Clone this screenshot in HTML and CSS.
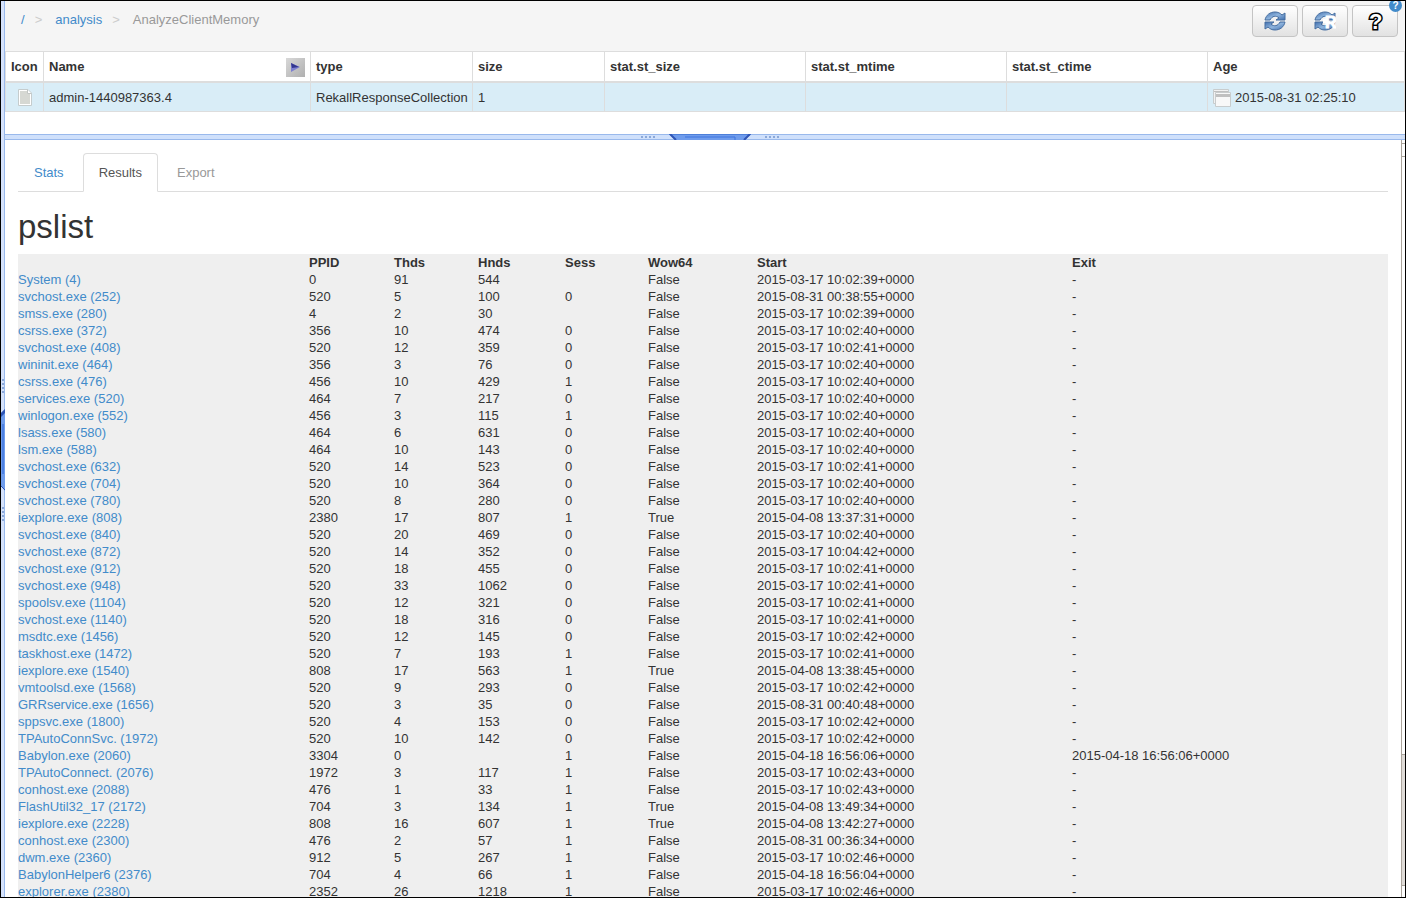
FILE: index.html
```html
<!DOCTYPE html>
<html lang="en">
<head>
    <meta charset="UTF-8">
    <meta name="viewport" content="width=device-width, initial-scale=1.0">
    <title>AnalyzeClientMemory</title>
    <link rel="stylesheet" href="styles.css">
</head>
<body>
    <div class="left-splitter">
        <span class="dots-v"></span>
        <svg class="grip-v" width="4" height="82" viewBox="0 0 4 82">
            <path d="M0 4L4 0V82L0 77Z" fill="#6f9cec"/>
            <path d="M0 4L4 0V4L0 8Z" fill="#2f55b5"/>
            <path d="M2 15V65" stroke="#2f66d8"/>
            <path d="M0 77L4 81" stroke="#2f55b5"/>
        </svg>
        <span class="dots-v"></span>
    </div>

    <main class="main">
        <header class="toolbar">
            <nav class="breadcrumb">
                <a href="#">/</a><span class="sep">&gt;</span>
                <a href="#">analysis</a><span class="sep">&gt;</span>
                <span class="current">AnalyzeClientMemory</span>
            </nav>
            <div class="buttons">
                <button type="button" aria-label="Refresh">
                    <svg width="22" height="20" viewBox="0 0 22 20">
                        <defs>
                            <linearGradient id="blue" x1="0" y1="0" x2="1" y2="1">
                                <stop offset="0" stop-color="#3f6ead"/>
                                <stop offset="0.5" stop-color="#8fb4dd"/>
                                <stop offset="1" stop-color="#3f6ead"/>
                            </linearGradient>
                            <g id="refresh">
                                <path d="M1 9C2 4 6 1 11 1C14 1 16 2 18 4L21 2V9H12L15 7C12 4 8 5 6 9Z" fill="url(#blue)" stroke="#446c9f"/>
                                <path d="M21 11C20 16 16 19 11 19C8 19 6 18 4 16L1 18V11H10L7 13C10 16 14 15 16 11Z" fill="url(#blue)" stroke="#446c9f"/>
                            </g>
                        </defs>
                        <use href="#refresh"/>
                    </svg>
                </button>
                <button type="button" aria-label="Refresh recursively">
                    <svg width="22" height="20" viewBox="0 0 22 20">
                        <use href="#refresh"/>
                        <path d="M9 10H13" stroke="#fff" stroke-width="4"/>
                        <text class="r-mark" x="11" y="17">R</text>
                    </svg>
                </button>
                <button type="button" aria-label="Help">
                    <svg width="22" height="22" viewBox="0 0 22 22">
                        <text class="q-mark" x="5" y="19">?</text>
                    </svg>
                </button>
            </div>
        </header>

        <section class="top-pane">
            <table class="files">
                <colgroup>
                    <col class="f-icon"><col class="f-name"><col class="f-type"><col class="f-num">
                    <col class="f-stat"><col class="f-stat"><col class="f-stat"><col>
                </colgroup>
                <thead>
                    <tr>
                        <th>Icon</th>
                        <th>
                            <div class="name-head">Name
                                <button type="button" class="expand" aria-label="Expand">
                                    <svg width="9" height="9" viewBox="0 0 9 9">
                                        <path d="M0 0L9 4L0 9Z" fill="#7d7fd0"/>
                                        <path d="M0 0L8 4L1 5Z" fill="#33368f"/>
                                    </svg>
                                </button>
                            </div>
                        </th>
                        <th>type</th>
                        <th>size</th>
                        <th>stat.st_size</th>
                        <th>stat.st_mtime</th>
                        <th>stat.st_ctime</th>
                        <th>Age</th>
                    </tr>
                </thead>
                <tbody>
                    <tr>
                        <td class="center">
                            <svg width="16" height="17" viewBox="0 0 16 17">
                                <path d="M1.5 0.5H11L14.5 4V16.5H1.5Z" fill="#fff" stroke="#c5cccd"/>
                                <path d="M3 2H10L13 5V15H3Z" fill="#d6d8d3"/>
                                <path d="M10.5 1V4.5H14" fill="#fff" stroke="#c2c6c4"/>
                            </svg>
                        </td>
                        <td>admin-1440987363.4</td>
                        <td>RekallResponseCollection</td>
                        <td>1</td>
                        <td></td>
                        <td></td>
                        <td></td>
                        <td>
                            <div class="age">
                                <svg width="18" height="18" viewBox="0 0 18 18">
                                    <path d="M0.5 0.5H15.5V14.5H0.5Z" fill="#f2f2f2" stroke="#c8cccd"/>
                                    <path d="M1 2H15V3H1Z" fill="#c0c0c0"/>
                                    <path d="M2.5 3.5H17.5V17.5H2.5Z" fill="#f8f8f8" stroke="#c8cccd"/>
                                    <path d="M3 5H17V8H3Z" fill="#c0c0c0"/>
                                </svg>
                                2015-08-31 02:25:10
                            </div>
                        </td>
                    </tr>
                </tbody>
            </table>
        </section>

        <div class="splitter">
            <span class="dots"></span>
            <svg width="82" height="6" viewBox="0 0 82 6">
                <path d="M0 0H82L76 6H6Z" fill="#6f9cec"/>
                <path d="M0 0H82V1H0Z" fill="#4d7fd9"/>
                <path d="M1 0L7 6M81 0L75 6" stroke="#2f55b5" stroke-width="2"/>
                <path d="M16 3H66V6" fill="none" stroke="#3f74de"/>
            </svg>
            <span class="dots"></span>
        </div>

        <section class="bottom-pane">
            <div class="content">
                <ul class="tabs">
                    <li><a href="#">Stats</a></li>
                    <li><a href="#" class="active">Results</a></li>
                    <li><a href="#" class="disabled">Export</a></li>
                </ul>

                <h1>pslist</h1>

                <table class="pslist">
                    <colgroup>
                        <col class="p-name"><col class="p-ppid"><col class="p-thds"><col class="p-hnds"><col class="p-sess">
                        <col class="p-wow"><col class="p-start"><col>
                    </colgroup>
                    <thead>
                        <tr><th></th><th>PPID</th><th>Thds</th><th>Hnds</th><th>Sess</th><th>Wow64</th><th>Start</th><th>Exit</th></tr>
                    </thead>
                    <tbody>
                        <tr><td><a href="#">System (4)</a></td><td>0</td><td>91</td><td>544</td><td></td><td>False</td><td>2015-03-17 10:02:39+0000</td><td>-</td></tr>
                        <tr><td><a href="#">svchost.exe (252)</a></td><td>520</td><td>5</td><td>100</td><td>0</td><td>False</td><td>2015-08-31 00:38:55+0000</td><td>-</td></tr>
                        <tr><td><a href="#">smss.exe (280)</a></td><td>4</td><td>2</td><td>30</td><td></td><td>False</td><td>2015-03-17 10:02:39+0000</td><td>-</td></tr>
                        <tr><td><a href="#">csrss.exe (372)</a></td><td>356</td><td>10</td><td>474</td><td>0</td><td>False</td><td>2015-03-17 10:02:40+0000</td><td>-</td></tr>
                        <tr><td><a href="#">svchost.exe (408)</a></td><td>520</td><td>12</td><td>359</td><td>0</td><td>False</td><td>2015-03-17 10:02:41+0000</td><td>-</td></tr>
                        <tr><td><a href="#">wininit.exe (464)</a></td><td>356</td><td>3</td><td>76</td><td>0</td><td>False</td><td>2015-03-17 10:02:40+0000</td><td>-</td></tr>
                        <tr><td><a href="#">csrss.exe (476)</a></td><td>456</td><td>10</td><td>429</td><td>1</td><td>False</td><td>2015-03-17 10:02:40+0000</td><td>-</td></tr>
                        <tr><td><a href="#">services.exe (520)</a></td><td>464</td><td>7</td><td>217</td><td>0</td><td>False</td><td>2015-03-17 10:02:40+0000</td><td>-</td></tr>
                        <tr><td><a href="#">winlogon.exe (552)</a></td><td>456</td><td>3</td><td>115</td><td>1</td><td>False</td><td>2015-03-17 10:02:40+0000</td><td>-</td></tr>
                        <tr><td><a href="#">lsass.exe (580)</a></td><td>464</td><td>6</td><td>631</td><td>0</td><td>False</td><td>2015-03-17 10:02:40+0000</td><td>-</td></tr>
                        <tr><td><a href="#">lsm.exe (588)</a></td><td>464</td><td>10</td><td>143</td><td>0</td><td>False</td><td>2015-03-17 10:02:40+0000</td><td>-</td></tr>
                        <tr><td><a href="#">svchost.exe (632)</a></td><td>520</td><td>14</td><td>523</td><td>0</td><td>False</td><td>2015-03-17 10:02:41+0000</td><td>-</td></tr>
                        <tr><td><a href="#">svchost.exe (704)</a></td><td>520</td><td>10</td><td>364</td><td>0</td><td>False</td><td>2015-03-17 10:02:40+0000</td><td>-</td></tr>
                        <tr><td><a href="#">svchost.exe (780)</a></td><td>520</td><td>8</td><td>280</td><td>0</td><td>False</td><td>2015-03-17 10:02:40+0000</td><td>-</td></tr>
                        <tr><td><a href="#">iexplore.exe (808)</a></td><td>2380</td><td>17</td><td>807</td><td>1</td><td>True</td><td>2015-04-08 13:37:31+0000</td><td>-</td></tr>
                        <tr><td><a href="#">svchost.exe (840)</a></td><td>520</td><td>20</td><td>469</td><td>0</td><td>False</td><td>2015-03-17 10:02:40+0000</td><td>-</td></tr>
                        <tr><td><a href="#">svchost.exe (872)</a></td><td>520</td><td>14</td><td>352</td><td>0</td><td>False</td><td>2015-03-17 10:04:42+0000</td><td>-</td></tr>
                        <tr><td><a href="#">svchost.exe (912)</a></td><td>520</td><td>18</td><td>455</td><td>0</td><td>False</td><td>2015-03-17 10:02:41+0000</td><td>-</td></tr>
                        <tr><td><a href="#">svchost.exe (948)</a></td><td>520</td><td>33</td><td>1062</td><td>0</td><td>False</td><td>2015-03-17 10:02:41+0000</td><td>-</td></tr>
                        <tr><td><a href="#">spoolsv.exe (1104)</a></td><td>520</td><td>12</td><td>321</td><td>0</td><td>False</td><td>2015-03-17 10:02:41+0000</td><td>-</td></tr>
                        <tr><td><a href="#">svchost.exe (1140)</a></td><td>520</td><td>18</td><td>316</td><td>0</td><td>False</td><td>2015-03-17 10:02:41+0000</td><td>-</td></tr>
                        <tr><td><a href="#">msdtc.exe (1456)</a></td><td>520</td><td>12</td><td>145</td><td>0</td><td>False</td><td>2015-03-17 10:02:42+0000</td><td>-</td></tr>
                        <tr><td><a href="#">taskhost.exe (1472)</a></td><td>520</td><td>7</td><td>193</td><td>1</td><td>False</td><td>2015-03-17 10:02:41+0000</td><td>-</td></tr>
                        <tr><td><a href="#">iexplore.exe (1540)</a></td><td>808</td><td>17</td><td>563</td><td>1</td><td>True</td><td>2015-04-08 13:38:45+0000</td><td>-</td></tr>
                        <tr><td><a href="#">vmtoolsd.exe (1568)</a></td><td>520</td><td>9</td><td>293</td><td>0</td><td>False</td><td>2015-03-17 10:02:42+0000</td><td>-</td></tr>
                        <tr><td><a href="#">GRRservice.exe (1656)</a></td><td>520</td><td>3</td><td>35</td><td>0</td><td>False</td><td>2015-08-31 00:40:48+0000</td><td>-</td></tr>
                        <tr><td><a href="#">sppsvc.exe (1800)</a></td><td>520</td><td>4</td><td>153</td><td>0</td><td>False</td><td>2015-03-17 10:02:42+0000</td><td>-</td></tr>
                        <tr><td><a href="#">TPAutoConnSvc. (1972)</a></td><td>520</td><td>10</td><td>142</td><td>0</td><td>False</td><td>2015-03-17 10:02:42+0000</td><td>-</td></tr>
                        <tr><td><a href="#">Babylon.exe (2060)</a></td><td>3304</td><td>0</td><td></td><td>1</td><td>False</td><td>2015-04-18 16:56:06+0000</td><td>2015-04-18 16:56:06+0000</td></tr>
                        <tr><td><a href="#">TPAutoConnect. (2076)</a></td><td>1972</td><td>3</td><td>117</td><td>1</td><td>False</td><td>2015-03-17 10:02:43+0000</td><td>-</td></tr>
                        <tr><td><a href="#">conhost.exe (2088)</a></td><td>476</td><td>1</td><td>33</td><td>1</td><td>False</td><td>2015-03-17 10:02:43+0000</td><td>-</td></tr>
                        <tr><td><a href="#">FlashUtil32_17 (2172)</a></td><td>704</td><td>3</td><td>134</td><td>1</td><td>True</td><td>2015-04-08 13:49:34+0000</td><td>-</td></tr>
                        <tr><td><a href="#">iexplore.exe (2228)</a></td><td>808</td><td>16</td><td>607</td><td>1</td><td>True</td><td>2015-04-08 13:42:27+0000</td><td>-</td></tr>
                        <tr><td><a href="#">conhost.exe (2300)</a></td><td>476</td><td>2</td><td>57</td><td>1</td><td>False</td><td>2015-08-31 00:36:34+0000</td><td>-</td></tr>
                        <tr><td><a href="#">dwm.exe (2360)</a></td><td>912</td><td>5</td><td>267</td><td>1</td><td>False</td><td>2015-03-17 10:02:46+0000</td><td>-</td></tr>
                        <tr><td><a href="#">BabylonHelper6 (2376)</a></td><td>704</td><td>4</td><td>66</td><td>1</td><td>False</td><td>2015-04-18 16:56:04+0000</td><td>-</td></tr>
                        <tr><td><a href="#">explorer.exe (2380)</a></td><td>2352</td><td>26</td><td>1218</td><td>1</td><td>False</td><td>2015-03-17 10:02:46+0000</td><td>-</td></tr>
                    </tbody>
                </table>
            </div>
            <div class="scrollbar">
                <span class="arrow"></span>
                <span class="thumb"></span>
            </div>
        </section>
    </main>

    <a href="#" class="help-badge" aria-label="Help">?</a>
</body>
</html>
```
FILE: styles.css
```css
* {
    box-sizing: border-box;
}

body {
    margin: 0;
    height: 100vh;
    display: flex;
    overflow: hidden;
    position: relative;
    border: 1px solid #000;
    background-color: #fff;
    font-family: "Liberation Sans", Arial, sans-serif;
    font-size: 13px;
    line-height: 18px;
    color: #333;
}

a {
    color: #428bca;
    text-decoration: none;
}

a:hover {
    text-decoration: underline;
}

table {
    width: 100%;
    table-layout: fixed;
    border-collapse: collapse;
}

th {
    text-align: left;
}

svg {
    display: block;
}

/* splitters */
.left-splitter {
    width: 4px;
    flex: none;
    display: flex;
    flex-direction: column;
    align-items: center;
    justify-content: center;
    gap: 16px;
    padding-top: 2px;
    background-color: #d5e2fb;
    border-right: 1px solid #99b9ec;
}

.dots-v {
    width: 2px;
    height: 14px;
    background: repeating-linear-gradient(to bottom, #8ba8d8 0 2px, transparent 2px 4px);
}

.splitter {
    height: 6px;
    flex: none;
    display: flex;
    align-items: center;
    justify-content: center;
    gap: 14px;
    padding-left: 10px;
    background-color: #cfe0fb;
    border-top: 1px solid #99b9ec;
    border-bottom: 1px solid #99b9ec;
}

.dots {
    width: 14px;
    height: 2px;
    background: repeating-linear-gradient(to right, #8ba8d8 0 2px, transparent 2px 4px);
}

.main {
    flex: 1;
    min-width: 0;
    display: flex;
    flex-direction: column;
}

/* toolbar */
.toolbar {
    height: 50px;
    flex: none;
    display: flex;
    justify-content: space-between;
    align-items: flex-start;
    padding: 4px 7px 0 16px;
    background-color: #f5f5f5;
}

.breadcrumb {
    display: flex;
    padding-top: 6px;
}

.sep {
    padding: 0 13px 0 10px;
    color: #ccc;
}

.current {
    color: #999;
}

.buttons {
    display: flex;
    gap: 4px;
}

.buttons button {
    width: 46px;
    height: 32px;
    display: flex;
    align-items: center;
    justify-content: center;
    padding: 0;
    border: 1px solid #c4c4c4;
    border-radius: 4px;
    background: linear-gradient(#fff, #e2e2e2);
}

.r-mark {
    font-size: 16px;
    font-weight: bold;
    fill: #fff;
    stroke: #fff;
    stroke-width: 1px;
}

.q-mark {
    font-size: 22px;
    font-weight: bold;
    fill: #fff;
    stroke: #000;
    stroke-width: 3px;
    paint-order: stroke;
}

.help-badge {
    position: absolute;
    top: -2px;
    right: 3px;
    width: 13px;
    height: 13px;
    border-radius: 50%;
    background-color: #428bca;
    color: #fff;
    font-size: 10px;
    font-weight: bold;
    line-height: 13px;
    text-align: center;
}

/* file table */
.top-pane {
    height: 83px;
    flex: none;
}

.files th,
.files td {
    height: 30px;
    padding: 2px 5px 0;
    border: 1px solid #ddd;
    white-space: nowrap;
}

.files th {
    border-bottom-width: 2px;
}

.files td {
    background-color: #d9edf7;
}

.files .center svg {
    margin: 0 auto;
}

.f-icon {
    width: 38px;
}

.f-name {
    width: 267px;
}

.f-type {
    width: 162px;
}

.f-num {
    width: 132px;
}

.f-stat {
    width: 201px;
}

.name-head {
    display: flex;
    align-items: center;
    justify-content: space-between;
}

.expand {
    width: 19px;
    height: 19px;
    display: flex;
    align-items: center;
    justify-content: center;
    padding: 0;
    border: 0;
    background: linear-gradient(135deg, #d8d8d8, #b0b0b0);
}

.age {
    display: flex;
    align-items: center;
    gap: 4px;
}

/* results */
.bottom-pane {
    flex: 1;
    min-height: 0;
    display: flex;
}

.content {
    flex: 1;
    overflow: hidden;
    padding: 13px 13px 0;
}

.tabs {
    display: flex;
    gap: 3px;
    margin: 0;
    padding: 0;
    list-style: none;
    border-bottom: 1px solid #ddd;
}

.tabs a {
    display: block;
    margin-bottom: -1px;
    padding: 10px 15px 9px;
    border: 1px solid transparent;
    border-radius: 4px 4px 0 0;
}

.tabs .active {
    background-color: #fff;
    border-color: #ddd;
    border-bottom-color: #fff;
    color: #555;
}

.tabs .disabled {
    color: #999;
}

h1 {
    margin: 16px 0 8px;
    font-size: 33px;
    font-weight: normal;
    line-height: 38px;
}

.pslist {
    background-color: #efefef;
    line-height: 17px;
}

.pslist th,
.pslist td {
    padding: 0;
}

.p-name {
    width: 291px;
}

.p-ppid {
    width: 85px;
}

.p-thds {
    width: 84px;
}

.p-hnds {
    width: 87px;
}

.p-sess {
    width: 83px;
}

.p-wow {
    width: 109px;
}

.p-start {
    width: 315px;
}

/* scrollbar */
.scrollbar {
    width: 4px;
    flex: none;
    display: flex;
    flex-direction: column;
    justify-content: space-between;
    padding: 3px 0 11px;
    border-left: 1px solid #aaa49c;
}

.arrow {
    height: 14px;
    border-top: 1px solid #aaa49c;
    border-bottom: 1px solid #aaa49c;
}

.thumb {
    height: 132px;
    background-color: #e0dcd8;
    border-top: 1px solid #aaa49c;
    border-bottom: 1px solid #aaa49c;
}
```
